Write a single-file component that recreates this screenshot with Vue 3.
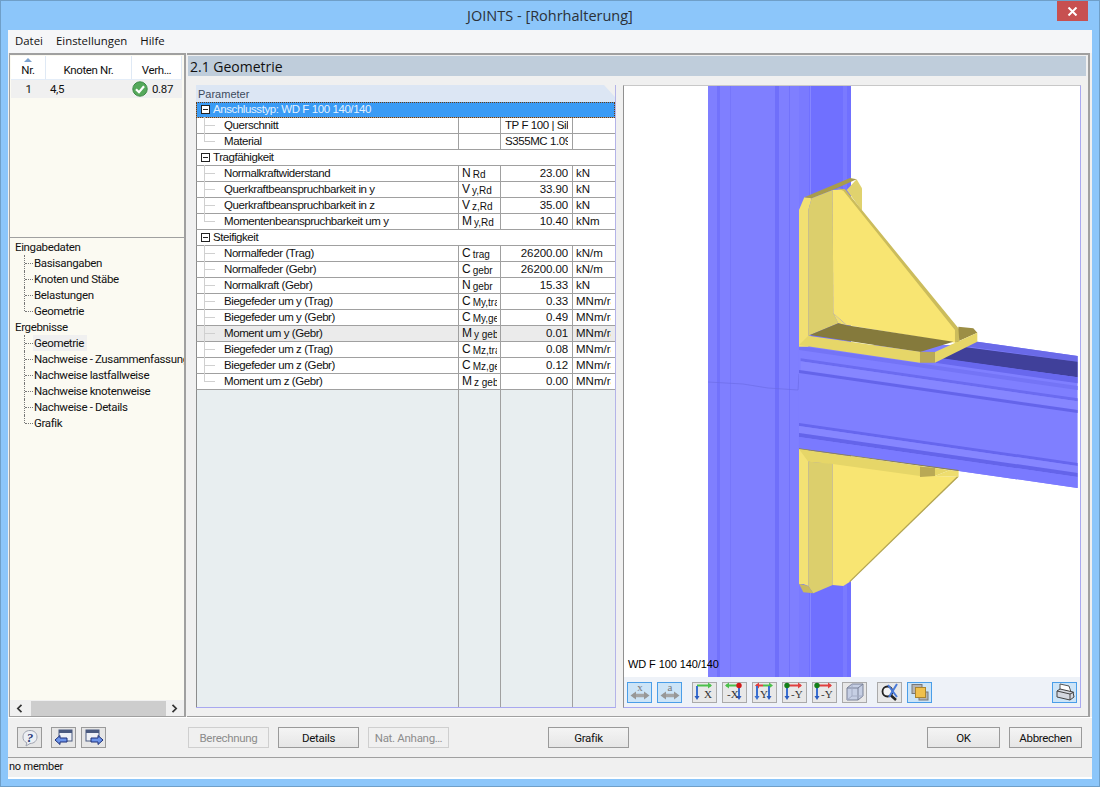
<script setup>
const menu = ['Datei', 'Einstellungen', 'Hilfe']

const inputs = ['Basisangaben', 'Knoten und Stäbe', 'Belastungen', 'Geometrie']
const results = ['Geometrie', 'Nachweise - Zusammenfassung', 'Nachweise lastfallweise', 'Nachweise knotenweise', 'Nachweise - Details', 'Grafik']

const rows = [
  { group: 'Anschlusstyp: WD F 100 140/140', selected: true },
  { name: 'Querschnitt', text: 'TP F 100 | Sikla' },
  { name: 'Material', text: 'S355MC 1.0976', last: true },
  { group: 'Tragfähigkeit' },
  { name: 'Normalkraftwiderstand', sym: 'N', sub: 'Rd', value: '23.00', unit: 'kN' },
  { name: 'Querkraftbeanspruchbarkeit in y', sym: 'V', sub: 'y,Rd', value: '33.90', unit: 'kN' },
  { name: 'Querkraftbeanspruchbarkeit in z', sym: 'V', sub: 'z,Rd', value: '35.00', unit: 'kN' },
  { name: 'Momentenbeanspruchbarkeit um y', sym: 'M', sub: 'y,Rd', value: '10.40', unit: 'kNm', last: true },
  { group: 'Steifigkeit' },
  { name: 'Normalfeder (Trag)', sym: 'C', sub: 'trag', value: '26200.00', unit: 'kN/m' },
  { name: 'Normalfeder (Gebr)', sym: 'C', sub: 'gebr', value: '26200.00', unit: 'kN/m' },
  { name: 'Normalkraft (Gebr)', sym: 'N', sub: 'gebr', value: '15.33', unit: 'kN' },
  { name: 'Biegefeder um y (Trag)', sym: 'C', sub: 'My,trag', value: '0.33', unit: 'MNm/rad' },
  { name: 'Biegefeder um y (Gebr)', sym: 'C', sub: 'My,gebr', value: '0.49', unit: 'MNm/rad' },
  { name: 'Moment um y (Gebr)', sym: 'M', sub: 'y gebr', value: '0.01', unit: 'MNm/rad', shaded: true },
  { name: 'Biegefeder um z (Trag)', sym: 'C', sub: 'Mz,trag', value: '0.08', unit: 'MNm/rad' },
  { name: 'Biegefeder um z (Gebr)', sym: 'C', sub: 'Mz,gebr', value: '0.12', unit: 'MNm/rad' },
  { name: 'Moment um z (Gebr)', sym: 'M', sub: 'z gebr', value: '0.00', unit: 'MNm/rad', last: true },
]

// axis buttons of the view toolbar
const axes = [
  { label: 'X', lx: 10, h: '#4cc04c', hx: [3, 17], v: 3, dot: null },
  { label: '-X', lx: 3, h: '#4cc04c', hx: [15, 2], v: 15, dot: '#d01818' },
  { label: 'Y', lx: 6, h: '#e04040', hx: [9, 2], v: 15, h2: '#4cc04c', v2: 2 },
  { label: '-Y', lx: 7, h: '#e04040', hx: [3, 17], v: 3, dot: '#14801c' },
  { label: '-Y', lx: 7, h: '#e04040', hx: [3, 17], v: 3, dot: '#14801c' },
]
</script>

<template>
  <div class="win">
    <div class="titlebar">
      <span></span>
      <span class="title">JOINTS - [Rohrhalterung]</span>
      <div class="close">
        <svg width="11" height="9" viewBox="0 0 11 9"><path d="M1.5 .5l8 8M9.5 .5l-8 8" stroke="#fff" stroke-width="2" /></svg>
      </div>
    </div>

    <div class="client">
      <div class="menu">
        <span v-for="m in menu" :key="m">{{ m }}</span>
      </div>

      <div class="main">
        <div class="left">
          <div class="list">
            <div class="list-head">
              <div class="lh nr"><i class="sort"></i>Nr.</div>
              <div class="lh kn">Knoten Nr.</div>
              <div class="lh vh">Verh…</div>
            </div>
            <div class="list-row">
              <span class="nr">1</span>
              <span class="kn-val">4,5</span>
              <svg class="ok" width="16" height="16" viewBox="0 0 16 16">
                <circle cx="8" cy="8" r="7.2" fill="#55a85a" stroke="#3f8a48" />
                <path d="M4 8.2l3 3 5-6" fill="none" stroke="#fff" stroke-width="2.2" />
              </svg>
              <span class="ratio">0.87</span>
            </div>
          </div>

          <div class="tree">
            <div class="t-parent">Eingabedaten</div>
            <div v-for="(t, i) in inputs" :key="t" class="t-child" :class="{ end: i === inputs.length - 1 }"><span>{{ t }}</span></div>
            <div class="t-parent">Ergebnisse</div>
            <div v-for="(t, i) in results" :key="t" class="t-child" :class="{ end: i === results.length - 1, cur: i === 0 }"><span>{{ t }}</span></div>
          </div>

          <div class="hscroll">
            <svg width="7" height="9" viewBox="0 0 7 9"><path d="M5.5 .8L1.8 4.5l3.7 3.7" fill="none" stroke="#333" stroke-width="1.7" /></svg>
            <div class="thumb"></div>
            <svg width="7" height="9" viewBox="0 0 7 9"><path d="M1.5 .8l3.7 3.7-3.7 3.7" fill="none" stroke="#333" stroke-width="1.7" /></svg>
          </div>
        </div>

        <div class="right">
          <div class="heading">2.1 Geometrie</div>
          <div class="panels">
            <div class="params">
              <div class="params-head">Parameter</div>
              <div
                v-for="r in rows"
                :key="r.group || r.name"
                class="row"
                :class="{ group: r.group, selected: r.selected, shaded: r.shaded, last: r.last }"
              >
                <template v-if="r.group">
                  <i class="expander"></i>
                  <span class="group-name">{{ r.group }}</span>
                </template>
                <template v-else>
                  <div class="cell name"><span>{{ r.name }}</span></div>
                  <div class="cell sym"><span>{{ r.sym }}<small>{{ r.sub }}</small></span></div>
                  <div class="cell val" :class="{ txt: r.text }"><span>{{ r.text || r.value }}</span></div>
                  <div class="cell unit"><span>{{ r.unit }}</span></div>
                </template>
              </div>
              <div class="filler">
                <div></div><div></div><div></div><div></div>
              </div>
            </div>

            <div class="graphic">
              <div class="canvas">
                <svg class="model" viewBox="624 86 456 591" width="456" height="591">
                  <!-- column -->
                  <rect x="708" y="86" width="143" height="591" fill="#7070ff" />
                  <rect x="708" y="86" width="91" height="591" fill="#7f7fff" />
                  <rect x="717" y="86" width="3" height="591" fill="#7272fb" />
                  <rect x="730" y="86" width="1" height="591" fill="#7676fb" />
                  <rect x="775" y="86" width="4" height="591" fill="#6f6ffa" />
                  <rect x="789" y="86" width="1" height="591" fill="#7272fb" />
                  <rect x="799" y="86" width="10" height="591" fill="#7a7aff" />
                  <rect x="810" y="86" width="1" height="591" fill="#8686ff" />
                  <rect x="843" y="86" width="4" height="591" fill="#7a7aff" />
                  <path d="M708 382l35 2 25 4 30 2 1-16 55-4" fill="none" stroke="#6a6ae2" stroke-width=".6" />

                  <!-- beam, in 3x zoom coordinates -->
                  <g transform="translate(690 170) scale(.3333)">
                    <path d="M327 525H780L862 515 1163 558V954L327 834Z" fill="#7f7fff" />
                    <path d="M862 515L1163 558V575L800 525Z" fill="#6a6ae8" />
                    <path d="M800 528L1163 575V622L745 565Z" fill="#40409a" />
                    <path d="M735 562L1163 622V640L735 578Z" fill="#6868ee" />
                    <path d="M327 528L1163 648V660L327 540Z" fill="#7474f6" />
                    <path d="M332 565L1163 685V694L332 574Z" fill="#6b6bf0" />
                    <path d="M332 574L1163 694V720L332 600Z" fill="#8686ff" />
                    <path d="M327 600L1163 720V729L327 609Z" fill="#6464ea" />
                    <path d="M327 759L1163 879V888L327 768Z" fill="#6666ee" />
                    <path d="M327 768L1163 888V909L327 789Z" fill="#8686ff" />
                    <path d="M327 789L1163 909V921L327 801Z" fill="#6464ea" />
                    <path d="M327 801L1163 921V954L327 834Z" fill="#7a7aff" />
                  </g>

                  <!-- upper gusset, traced in 3x zoom coordinates -->
                  <g transform="translate(690 170) scale(.3333)">
                    <path d="M470 60L500 28 516 55V122Z" fill="#e0d26e" />
                    <path d="M327 120L343 82 365 85 355 120V530H327Z" fill="#f2e072" />
                    <path d="M343 82L480 24 500 28 440 55 365 85Z" fill="#a89c4c" />
                    <path d="M355 120L365 85 428 60 430 430 445 460 360 495 355 500Z" fill="#dccf6c" />
                    <path d="M430 430L470 466 445 460Z" fill="#efdf70" />
                    <path d="M428 60L462 58 805 478 795 518 470 465 430 430Z" fill="#f8e572" />
                    <path d="M440 55L465 58 808 478 808 515 795 518 795 480 460 62Z" fill="#cbbc5c" />
                    <path d="M805 470L850 475 862 488 795 518 808 515Z" fill="#9c8e45" />
                    <path d="M360 495L445 460 470 466 790 515 690 546Z" fill="#857a3c" />
                    <path d="M327 525L355 497 690 545V578L327 525Z" fill="#e6d668" />
                    <path d="M690 545L735 546V578H690Z" fill="#b9a955" />
                    <path d="M735 546L862 488V515L735 578Z" fill="#e6d668" />
                  </g>

                  <!-- lower gusset -->
                  <g transform="translate(690 420) scale(.3333)">
                    <path d="M327 87L355 90V498L340 492H327Z" fill="#f3e274" />
                    <path d="M355 125L428 130V495L370 520 355 498Z" fill="#dccf6c" />
                    <path d="M428 130L690 165 735 168 805 170 480 485 460 498 428 495Z" fill="#f8e572" />
                    <path d="M327 87L780 150 735 168H690L428 132 355 125Z" fill="#e6d668" />
                    <path d="M690 140L735 143V168L690 171Z" fill="#b9a955" />
                    <path d="M735 168L780 150 806 153V170Z" fill="#eedd6e" />
                    <path d="M806 170L480 487 478 484 800 170Z" fill="#b3a554" />
                    <path d="M327 491L355 498 370 520 340 517Z" fill="#c9ba5e" />
                    <path d="M327 87L806 153V150L327 85Z" fill="#8c8246" />
                  </g>
                </svg>
                <span class="model-label">WD F 100 140/140</span>
              </div>

              <div class="toolbar">
                <div class="tb on">
                  <svg width="22" height="20" viewBox="0 0 22 20">
                    <text x="11" y="9" class="ic-t">x</text>
                    <path d="M4 13.500h14" stroke="#a4a4a4" stroke-width="3.500" />
                    <path d="M7 9.500l-5.500 4 5.500 4zM15 9.500l5.500 4-5.500 4z" fill="#979797" />
                  </svg>
                </div>
                <div class="tb on">
                  <svg width="22" height="20" viewBox="0 0 22 20">
                    <text x="11" y="9" class="ic-t">a</text>
                    <path d="M4 13.500h14" stroke="#a4a4a4" stroke-width="3.500" />
                    <path d="M7 9.500l-5.500 4 5.500 4zM15 9.500l5.500 4-5.500 4z" fill="#979797" />
                  </svg>
                </div>
                <div v-for="(a, i) in axes" :key="i" class="tb" :class="{ 'gap-l': i === 0 }">
                  <svg width="22" height="20" viewBox="0 0 22 20">
                    <path :d="`M${a.hx[0]} 3.5H${a.hx[1]}`" :stroke="a.h" stroke-width="2" />
                    <path :d="a.hx[1] > a.hx[0] ? `M${a.hx[1] - 3} .5l4 3-4 3z` : `M${a.hx[1] + 3} .5l-4 3 4 3z`" :fill="a.h" />
                    <template v-if="a.h2">
                      <path d="M9 3.5H17" :stroke="a.h2" stroke-width="2" />
                      <path d="M15 .5l4 3-4 3z" :fill="a.h2" />
                      <path d="M3 4V15" stroke="#3a6fd0" stroke-width="2" />
                      <path d="M.5 14l2.5 4 2.500-4z" fill="#3a6fd0" />
                    </template>
                    <path :d="`M${a.v} 4V15`" stroke="#3a6fd0" stroke-width="2" />
                    <path :d="`M${a.v - 2.5} 14l2.500 4 2.500-4z`" fill="#2a5cc0" />
                    <circle v-if="a.dot" :cx="a.v" cy="3.500" r="2.700" :fill="a.dot" />
                    <text :x="a.lx" y="16" class="ic-a">{{ a.label }}</text>
                  </svg>
                </div>
                <div class="tb">
                  <svg width="22" height="20" viewBox="0 0 22 20">
                    <path d="M3 6l5-4h11v12l-5 4H3z" fill="#c6cfe4" stroke="#7a8298" />
                    <path d="M3 6h11v12M14 6l5-4" fill="none" stroke="#7a8298" />
                    <path d="M3 18l5-4h11M8 2v12" fill="none" stroke="#a4acc4" />
                  </svg>
                </div>
                <div class="tb gap-l">
                  <svg width="22" height="20" viewBox="0 0 22 20">
                    <circle cx="8.500" cy="9.500" r="5" fill="#f4f4f4" stroke="#222" stroke-width="1.800" />
                    <path d="M12 13.500l5 4.500" stroke="#222" stroke-width="2.500" />
                    <path d="M9 3l9 12M18 2L10 15" stroke="#4a7ad8" stroke-width="2" />
                  </svg>
                </div>
                <div class="tb on">
                  <svg width="22" height="20" viewBox="0 0 22 20">
                    <rect x="3" y="2.500" width="10" height="9" fill="#b4b4b4" stroke="#777" />
                    <rect x="10" y="10" width="9" height="8" fill="#b4b4b4" stroke="#777" />
                    <rect x="6.500" y="5.500" width="10" height="10" fill="#f0c04c" stroke="#a88430" />
                  </svg>
                </div>
                <div class="tb on print">
                  <svg width="22" height="20" viewBox="0 0 22 20">
                    <path d="M6 2l9 2 2 6-11-2z" fill="#fff" stroke="#555" />
                    <path d="M3 9l3-2 13 3 1 5-4 3-13-3z" fill="#d4d8e0" stroke="#444" />
                    <path d="M3 9l13 3v6M16 12l4-2" fill="none" stroke="#444" />
                  </svg>
                </div>
              </div>
            </div>
          </div>
        </div>
      </div>

      <div class="actions">
        <div class="ib">
          <svg width="20" height="18" viewBox="0 0 20 18">
            <path d="M10 1.500c4.500 0 7 2.800 7 6.500s-2.800 6.500-7 6.500l-4 2.500 .8-3.300C4 12.500 3 10.500 3 8c0-3.700 2.500-6.500 7-6.500z" fill="#eceff4" stroke="#a0a4b0" />
            <text x="10" y="12.500" class="ic-q">?</text>
          </svg>
        </div>
        <div class="ib first">
          <svg width="20" height="18" viewBox="0 0 20 18">
            <rect x="5" y="1" width="13" height="11" fill="#eef1f7" stroke="#4a5a80" />
            <rect x="5" y="1" width="13" height="3" fill="#4a5a80" />
            <path d="M1 11l5-4.500V9h7v4H6v2.500z" fill="#6c94ea" stroke="#1c2f78" />
          </svg>
        </div>
        <div class="ib next">
          <svg width="20" height="18" viewBox="0 0 20 18">
            <rect x="2" y="1" width="13" height="11" fill="#eef1f7" stroke="#4a5a80" />
            <rect x="2" y="1" width="13" height="3" fill="#4a5a80" />
            <path d="M19 11l-5-4.500V9H7v4h7v2.500z" fill="#6c94ea" stroke="#1c2f78" />
          </svg>
        </div>
        <button class="btn dis b1">Berechnung</button>
        <button class="btn b2">Details</button>
        <button class="btn dis b3">Nat. Anhang…</button>
        <button class="btn b4">Grafik</button>
        <button class="btn b5">OK</button>
        <button class="btn b6">Abbrechen</button>
      </div>

      <div class="status">no member</div>
    </div>
  </div>
</template>

<style>
html,
body {
  margin: 0;
  background: #8cc6fa;
}
</style>

<style scoped>
.win {
  box-sizing: border-box;
  width: 1100px;
  height: 787px;
  border: 1px solid #6f9fc8;
  background: #8cc6fa;
  padding: 0 7px 7px;
  display: flex;
  flex-direction: column;
  font-family: "Liberation Sans", Arial, sans-serif;
  color: #111;
  overflow: hidden;
}

.titlebar {
  height: 29px;
  flex: none;
  margin: 0 -1px;
  display: grid;
  grid-template-columns: 1fr auto 1fr;
  font-family: "Open Sans", sans-serif;
  font-size: 14.5px;
  color: #2b3138;
}

.title {
  line-height: 29px;
}

.close {
  justify-self: end;
  margin-right: 5px;
  width: 31px;
  height: 20px;
  background: #c75050;
  display: flex;
  align-items: center;
  justify-content: center;
}

.client {
  flex: 1;
  min-height: 0;
  display: flex;
  flex-direction: column;
  background: #f0f0f0;
  border-bottom: 2px solid #fff;
}

.menu {
  height: 20px;
  flex: none;
  padding: 0 0 3px 7px;
  background: #f5f6f8;
  display: flex;
  gap: 13px;
  align-items: center;
  font-family: "Open Sans", sans-serif;
  font-size: 11.4px;
  color: #111;
}

.main {
  height: 664px;
  flex: none;
  display: flex;
  padding-left: 1px;
  gap: 1px;
}

.left {
  box-sizing: border-box;
  width: 177px;
  flex: none;
  border: 2px solid #a0a0a0;
  border-width: 2px 2px 1px 1px;
  background: #fbfaf2;
  display: flex;
  flex-direction: column;
  font-family: Roboto, sans-serif;
  font-size: 11.5px;
  letter-spacing: -0.36px;
}

.list {
  height: 182px;
  flex: none;
  border-bottom: 1px solid #a0a0a0;
}

.list-head {
  margin-top: 1px;
  height: 24px;
  background: #fff;
  display: flex;
  width: 171px;
  margin-left: 1px;
}

.lh {
  position: relative;
  box-sizing: border-box;
  border-right: 1px solid #dfe9f5;
  border-bottom: 1px solid #e4edf8;
  text-align: center;
  line-height: 28px;
}

.lh.nr {
  width: 35px;
}

.lh.kn {
  width: 86px;
}

.lh.vh {
  flex: 1;
}

.sort {
  position: absolute;
  left: 13px;
  top: 2px;
  width: 0;
  height: 0;
  border: 4px solid transparent;
  border-top: 0;
  border-bottom: 4px solid #7da2ce;
}

.list-row {
  height: 18px;
  width: 171px;
  margin-left: 1px;
  background: #f0f0f0;
  display: flex;
  align-items: center;
}

.list-row .nr {
  width: 35px;
  text-align: center;
}

.kn-val {
  width: 86px;
  padding-left: 4px;
  box-sizing: border-box;
}

.ok {
  flex: none;
}

.ratio {
  margin-left: 4px;
}

.tree {
  flex: 1;
  min-height: 0;
  padding-top: 1px;
  overflow: hidden;
  white-space: nowrap;
}

.t-parent {
  height: 16px;
  line-height: 16px;
  padding-left: 5px;
}

.t-child {
  position: relative;
  height: 16px;
  line-height: 16px;
  padding-left: 23px;
}

.t-child::before {
  content: "";
  position: absolute;
  left: 14px;
  top: 0;
  height: 16px;
  border-left: 1px dotted #777;
}

.t-child.end::before {
  height: 8px;
}

.t-child::after {
  content: "";
  position: absolute;
  left: 15px;
  top: 8px;
  width: 8px;
  border-top: 1px dotted #777;
}

.t-child span {
  display: inline-block;
  padding: 0 1px;
}

.t-child.cur span {
  background: #f0f0f0;
  padding-right: 3px;
}

.hscroll {
  height: 16px;
  flex: none;
  background: #f0f0f0;
  display: flex;
  align-items: center;
  justify-content: space-between;
  padding: 0 6px;
}

.hscroll svg {
  flex: none;
}

.thumb {
  flex: none;
  width: 135px;
  height: 15px;
  background: #cdcdcd;
  margin-left: 3px;
}

.right {
  box-sizing: border-box;
  flex: 1;
  margin-right: 2px;
  border-top: 2px solid #a0a0a0;
  border-right: 2px solid #a0a0a0;
  border-bottom: 1px solid #a0a0a0;
  padding: 1px 2px 0 1px;
  display: flex;
  flex-direction: column;
}

.heading {
  height: 20px;
  flex: none;
  background: #bfcddb;
  font-family: "Open Sans", sans-serif;
  font-size: 14px;
  line-height: 21px;
  padding-left: 2px;
}

.panels {
  height: 623px;
  margin-top: 9px;
  padding-left: 8px;
  display: flex;
  gap: 7px;
}

.params {
  box-sizing: border-box;
  width: 420px;
  flex: none;
  display: flex;
  flex-direction: column;
  border-right: 1px solid #b4b4e8;
  border-bottom: 1px solid #a8a8f0;
  font-size: 11.5px;
  letter-spacing: -0.42px;
}

.params-head {
  height: 17px;
  flex: none;
  background: #dce6f4;
  color: #3c4a5c;
  font-size: 11px;
  letter-spacing: 0;
  line-height: 18px;
  padding-left: 2px;
  clip-path: polygon(0 0, 408px 0, 100% 12px, 100% 100%, 0 100%);
}

.row {
  box-sizing: border-box;
  height: 16px;
  flex: none;
  display: grid;
  grid-template-columns: 262px 42px 72px 42px;
  background: #fff;
  border-left: 1px solid #8c8c8c;
  border-bottom: 1px solid #a0a0a0;
  position: relative;
}

.row.group {
  display: flex;
  align-items: center;
  padding-left: 4px;
  gap: 3px;
  line-height: 15px;
}

.group-name {
  white-space: nowrap;
}

.row.selected {
  background: #3a9bf5;
  color: #e4f2ff;
  outline: 1px dotted #6a3a10;
  outline-offset: -1px;
}

.row.shaded {
  background: #ebebeb;
}

.expander {
  box-sizing: border-box;
  width: 9px;
  height: 9px;
  border: 1px solid #222;
  background: linear-gradient(#222, #222) center / 5px 1px no-repeat #fff;
  flex: none;
}

.cell {
  box-sizing: border-box;
  border-right: 1px solid #a0a0a0;
  line-height: 15px;
  min-width: 0;
}

.cell span {
  display: block;
  overflow: hidden;
  white-space: nowrap;
}

.name {
  position: relative;
  padding-left: 27px;
}

.name::before {
  content: "";
  position: absolute;
  left: 7px;
  top: -1px;
  height: 16px;
  border-left: 1px solid #d0d0d0;
}

.row.last .name::before {
  height: 9px;
}

.name::after {
  content: "";
  position: absolute;
  left: 8px;
  top: 7px;
  width: 10px;
  border-top: 1px solid #d0d0d0;
}

.sym {
  padding: 0 3px;
  font-size: 12px;
  letter-spacing: 0;
}

.sym small {
  font-size: 10px;
  margin-left: 2px;
  position: relative;
  top: 1px;
}

.val {
  padding: 0 4px 0 3px;
  text-align: right;
  letter-spacing: -0.1px;
}

.val.txt {
  text-align: left;
  padding: 0 4px;
  letter-spacing: -0.42px;
}

.unit {
  padding: 0 4px 0 3px;
  border-right: 0;
  letter-spacing: 0;
}

.filler {
  flex: 1;
  display: grid;
  grid-template-columns: 262px 42px 72px 42px;
  background: #e8eef0;
  border-left: 1px solid #8c8c8c;
}

.filler div {
  border-right: 1px solid #a0a0a0;
}

.filler div:last-child {
  border-right: 0;
}

.graphic {
  box-sizing: border-box;
  width: 458px;
  flex: none;
  background: #fff;
  border-top: 1px solid #c8c8c8;
  border-left: 1px solid #909090;
  border-right: 1px solid #a8a8f0;
  border-bottom: 1px solid #a8a8f0;
  display: flex;
  flex-direction: column;
}

.canvas {
  position: relative;
  height: 591px;
  flex: none;
  overflow: hidden;
}

.model {
  display: block;
}

.model-label {
  position: absolute;
  left: 4px;
  top: 572px;
  font-size: 11px;
  letter-spacing: -0.1px;
  color: #000;
  white-space: nowrap;
}

.toolbar {
  flex: 1;
  background: #eef2f8;
  display: flex;
  align-items: center;
  padding-left: 3px;
  gap: 5px;
}

.tb {
  box-sizing: border-box;
  width: 25px;
  height: 21px;
  background: #e8e8e8;
  border: 1px solid #aaa;
  display: flex;
  align-items: center;
  justify-content: center;
}

.tb.on {
  background: #cce4f7;
  border-color: #4a9ee8;
}

.gap-l {
  margin-left: 5px;
}

.print {
  margin-left: auto;
  margin-right: 3px;
}

.ic-t {
  font-family: "Liberation Serif", serif;
  font-size: 11px;
  fill: #777;
  text-anchor: middle;
}

.ic-a {
  font-family: "Liberation Serif", serif;
  font-size: 11px;
  fill: #333;
}

.ic-q {
  font-family: "Liberation Serif", serif;
  font-size: 13px;
  font-weight: bold;
  font-style: italic;
  fill: #2c3c7a;
  text-anchor: middle;
}

.actions {
  height: 40px;
  flex: none;
  display: flex;
  align-items: center;
  padding-left: 9px;
  background: #f0f0f0;
  border-top: 1px solid #fff;
  box-sizing: border-box;
}

.ib {
  box-sizing: border-box;
  width: 25px;
  height: 21px;
  background: #e6e6e6;
  border: 1px solid #9a9a9a;
  display: flex;
  align-items: center;
  justify-content: center;
  flex: none;
}

.ib.first {
  margin-left: 9px;
}

.ib.next {
  margin-left: 5px;
}

.btn {
  box-sizing: border-box;
  height: 21px;
  padding: 0;
  flex: none;
  font-family: Roboto, sans-serif;
  font-size: 11.5px;
  letter-spacing: -0.3px;
  color: #111;
  border: 1px solid #9a9a9a;
  background: linear-gradient(#f4f4f4, #e6e6e6);
}

.btn.dis {
  color: #8c8c8c;
  border-color: #cfcfcf;
  background: #f0f0f0;
}

.b1 {
  width: 81px;
  margin-left: 82px;
}

.b2 {
  width: 81px;
  margin-left: 9px;
}

.b3 {
  width: 81px;
  margin-left: 9px;
}

.b4 {
  width: 81px;
  margin-left: 99px;
}

.b5 {
  width: 73px;
  margin-left: 298px;
}

.b6 {
  width: 73px;
  margin-left: 9px;
}

.status {
  flex: 1;
  border-top: 1px solid #a0a0a0;
  padding-left: 1px;
  font-family: Roboto, sans-serif;
  font-size: 11px;
  letter-spacing: -0.2px;
  line-height: 18px;
}
</style>
